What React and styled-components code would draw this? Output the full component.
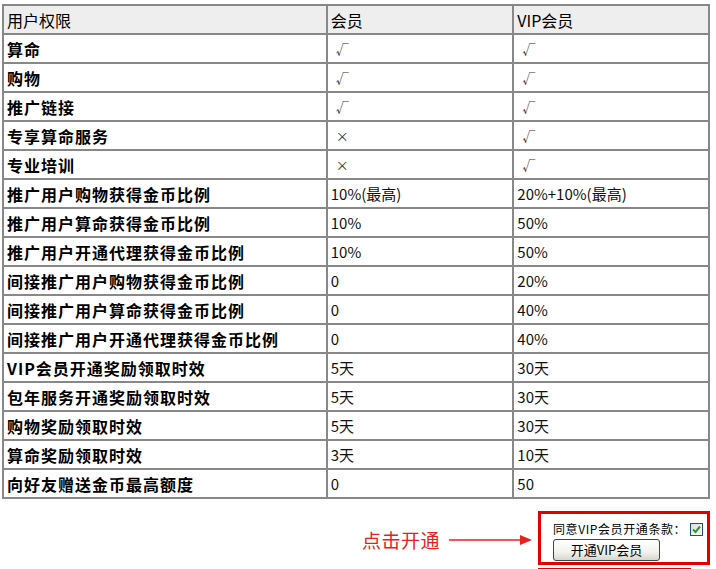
import React from "react";
import styled, { createGlobalStyle } from "styled-components";

const GlobalStyle = createGlobalStyle`
  body {
    margin: 0;
    background: #ffffff;
    font-family: "Noto Sans CJK SC", "Noto Sans", sans-serif;
    color: #000000;
  }
`;

const rows = [
  ["算命", "√", "√"],
  ["购物", "√", "√"],
  ["推广链接", "√", "√"],
  ["专享算命服务", "×", "√"],
  ["专业培训", "×", "√"],
  ["推广用户购物获得金币比例", "10%(最高)", "20%+10%(最高)"],
  ["推广用户算命获得金币比例", "10%", "50%"],
  ["推广用户开通代理获得金币比例", "10%", "50%"],
  ["间接推广用户购物获得金币比例", "0", "20%"],
  ["间接推广用户算命获得金币比例", "0", "40%"],
  ["间接推广用户开通代理获得金币比例", "0", "40%"],
  ["VIP会员开通奖励领取时效", "5天", "30天"],
  ["包年服务开通奖励领取时效", "5天", "30天"],
  ["购物奖励领取时效", "5天", "30天"],
  ["算命奖励领取时效", "3天", "10天"],
  ["向好友赠送金币最高额度", "0", "50"],
];

const isMark = (v) => v === "√" || v === "×";

function App() {
  return (
    <Page>
      <GlobalStyle />
      <Table>
        <colgroup>
          <col style={{ width: 321 }} />
          <col style={{ width: 185 }} />
          <col style={{ width: 194 }} />
        </colgroup>
        <thead>
          <tr>
            <Th>用户权限</Th>
            <Th>会员</Th>
            <Th>VIP会员</Th>
          </tr>
        </thead>
        <tbody>
          {rows.map((r) => (
            <tr key={r[0]}>
              <Label>{r[0]}</Label>
              <Value $mark={isMark(r[1])}>{r[1]}</Value>
              <Value $mark={isMark(r[2])}>{r[2]}</Value>
            </tr>
          ))}
        </tbody>
      </Table>

      <Footer>
        <Hint>
          点击开通
          <svg width="83" height="12" viewBox="0 0 83 12">
            <line x1="0" y1="6" x2="72" y2="6" stroke="#e8201c" strokeWidth="1.5" />
            <polygon points="71,1 83,6 71,11" fill="#e8201c" />
          </svg>
        </Hint>
        <Column>
          <Box>
            <Agree>
              同意VIP会员开通条款：
              <Check>
                <svg width="9" height="9" viewBox="0 0 9 9">
                  <path d="M1 4.5 L3.5 7 L8 1.5" stroke="#21a121" strokeWidth="2" fill="none" />
                </svg>
              </Check>
            </Agree>
            <Button>开通VIP会员</Button>
          </Box>
          <NextBox />
        </Column>
      </Footer>
    </Page>
  );
}

export default App;

const Page = styled.div`
  padding: 4px 6px 0 2px;
  height: 569px;
  box-sizing: border-box;
  overflow: hidden;
`;

const Table = styled.table`
  border-collapse: collapse;
  width: 708px;
  table-layout: fixed;
  border: 2px solid #888888;
  font-size: 16px;
  line-height: 20px;
`;

const Th = styled.th`
  background: #eeeeee;
  border: 2px solid #888888;
  height: 27px;
  padding: 0 3px;
  text-align: left;
  font-weight: normal;
  white-space: nowrap;
`;

const Label = styled.td`
  border: 2px solid #888888;
  height: 27px;
  padding: 0 3px;
  font-weight: bold;
  letter-spacing: 1px;
  white-space: nowrap;
`;

const Value = styled.td`
  border: 2px solid #888888;
  height: 27px;
  padding: 0 3px 0 ${(p) => (p.$mark ? "8px" : "3px")};
  font-size: ${(p) => (p.$mark ? "13px" : "15px")};
  color: ${(p) => (p.$mark ? "#333333" : "#111111")};
  white-space: nowrap;
`;

const Footer = styled.div`
  display: flex;
  justify-content: flex-end;
  align-items: flex-start;
  margin-top: 12px;
  width: 708px;
`;

const Hint = styled.div`
  display: flex;
  align-items: center;
  gap: 9px;
  margin-top: 16px;
  margin-right: 6px;
  color: #e8201c;
  font-size: 19px;
  line-height: 26px;
  letter-spacing: 0.5px;
`;

const Column = styled.div`
  display: flex;
  flex-direction: column;
  gap: 3px;
`;

const Box = styled.div`
  width: 172px;
  height: 54px;
  box-sizing: border-box;
  border: 3px solid #e00000;
  padding: 7px 0 0 12px;
  display: flex;
  flex-direction: column;
  gap: 2px;
`;

const Agree = styled.div`
  display: flex;
  align-items: center;
  gap: 4px;
  height: 16px;
  font-size: 12px;
  line-height: 16px;
  letter-spacing: 0.6px;
  color: #000000;
`;

const Check = styled.span`
  width: 11px;
  height: 11px;
  border: 1px solid #1c5180;
  background: linear-gradient(135deg, #dcdcd6, #ffffff);
  display: inline-flex;
  align-items: center;
  justify-content: center;
`;

const Button = styled.button`
  width: 107px;
  height: 22px;
  padding: 0;
  font-family: "Noto Sans CJK SC", sans-serif;
  font-size: 13px;
  line-height: 18px;
  color: #000000;
  border: 1px solid #3c4650;
  border-radius: 3px;
  background: linear-gradient(#ffffff, #f2f2ee 60%, #d8d6cc);
`;

const NextBox = styled.div`
  width: 153px;
  height: 20px;
  border-top: 3px solid #e00000;
`;
